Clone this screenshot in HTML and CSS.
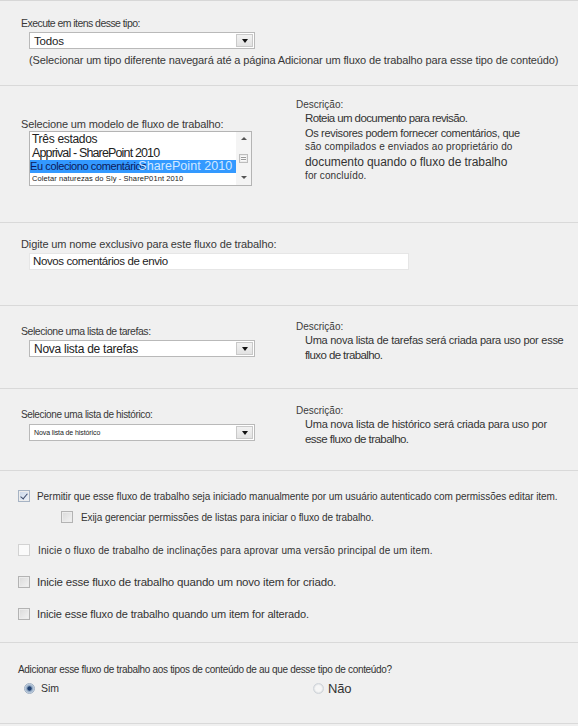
FILE: index.html
```html
<!DOCTYPE html>
<html lang="pt">
<head>
<meta charset="utf-8">
<title>Adicionar fluxo de trabalho</title>
<link rel="stylesheet" href="styles.css">
</head>
<body>
<div class="page">
  <section class="sec s1">
    <div class="lbl l-exec">Execute em itens desse tipo:</div>
    <div class="select sel-todos"><span class="val v-todos">Todos</span><span class="arrow"></span></div>
    <div class="note">(Selecionar um tipo diferente navegará até a página Adicionar um fluxo de trabalho para esse tipo de conteúdo)</div>
  </section>

  <section class="sec s2 split">
    <div class="left">
      <div class="lbl l-modelo">Selecione um modelo de fluxo de trabalho:</div>
      <div class="listbox">
        <div class="items">
          <div class="it it1">Três estados</div>
          <div class="it it2">Apprival - SharePoint 2010</div>
          <div class="it it3">Eu coleciono comentários<span class="ghost">SharePoint 2010</span></div>
          <div class="it it4">Coletar naturezas do Sly - ShareP01nt 2010</div>
        </div>
        <div class="sb"><span class="sb-up"></span><span class="sb-thumb"></span><span class="sb-down"></span></div>
      </div>
    </div>
    <div class="right">
      <div class="dlbl">Descrição:</div>
      <div class="desc d-wf">
        <div class="dl1">Roteia um documento para revisão.</div>
        <div class="dl2">Os revisores podem fornecer comentários, que</div>
        <div class="dl3">são compilados e enviados ao proprietário do</div>
        <div class="dl4">documento quando o fluxo de trabalho</div>
        <div class="dl5">for concluído.</div>
      </div>
    </div>
  </section>

  <section class="sec s3">
    <div class="lbl l-nome">Digite um nome exclusivo para este fluxo de trabalho:</div>
    <div class="input">Novos comentários de envio</div>
  </section>

  <section class="sec s4 split">
    <div class="left">
      <div class="lbl l-tarefas">Selecione uma lista de tarefas:</div>
      <div class="select sel-list"><span class="val v-tarefas">Nova lista de tarefas</span><span class="arrow"></span></div>
    </div>
    <div class="right">
      <div class="dlbl">Descrição:</div>
      <div class="desc d-list">
        <div class="ln-a">Uma nova lista de tarefas será criada para uso por esse</div>
        <div class="ln-b">fluxo de trabalho.</div>
      </div>
    </div>
  </section>

  <section class="sec s5 split">
    <div class="left">
      <div class="lbl l-hist">Selecione uma lista de histórico:</div>
      <div class="select sel-list"><span class="val v-hist">Nova lista de histórico</span><span class="arrow"></span></div>
    </div>
    <div class="right">
      <div class="dlbl">Descrição:</div>
      <div class="desc d-list">
        <div class="ln-h">Uma nova lista de histórico será criada para uso por</div>
        <div class="ln-c">esse fluxo de trabalho.</div>
      </div>
    </div>
  </section>

  <section class="sec s6">
    <label class="row r1"><span class="cb cb-checked"></span><span class="t t1">Permitir que esse fluxo de trabalho seja iniciado manualmente por um usuário autenticado com permissões editar item.</span></label>
    <label class="row r2"><span class="cb"></span><span class="t t2">Exija gerenciar permissões de listas para iniciar o fluxo de trabalho.</span></label>
    <label class="row r3"><span class="cb cb-light"></span><span class="t t3">Inicie o fluxo de trabalho de inclinações para aprovar uma versão principal de um item.</span></label>
    <label class="row r4"><span class="cb"></span><span class="t t4">Inicie esse fluxo de trabalho quando um novo item for criado.</span></label>
    <label class="row r5"><span class="cb"></span><span class="t t5">Inicie esse fluxo de trabalho quando um item for alterado.</span></label>
  </section>

  <section class="sec s7">
    <div class="q">Adicionar esse fluxo de trabalho aos tipos de conteúdo de au que desse tipo de conteúdo?</div>
    <div class="radios">
      <label class="radio r-sim"><span class="rb rb-on"></span><span class="rt-sim">Sim</span></label>
      <label class="radio r-nao"><span class="rb"></span><span class="rt-nao">Não</span></label>
    </div>
  </section>
</div>
</body>
</html>
```

FILE: styles.css
```css
html, body {
  margin: 0;
  padding: 0;
  background: #f0f0f0;
}
body {
  font-family: "Liberation Sans", Arial, sans-serif;
  color: #333;
  font-size: 11px;
}
.page {
  border-top: 1px solid #d7d7d7;
}
.sec {
  box-sizing: border-box;
  border-bottom: 1px solid #d9d9d9;
  padding-left: 21px;
}
.lbl {
  font-size: 11px;
  line-height: 14px;
  letter-spacing: -0.35px;
  color: #383838;
  white-space: nowrap;
}
.l-exec { font-size: 10.5px; letter-spacing: -0.55px; }
.l-modelo { letter-spacing: -0.15px; }
.l-nome { letter-spacing: -0.12px; }
.l-tarefas { font-size: 10.5px; letter-spacing: -0.45px; }
.l-hist { font-size: 10px; letter-spacing: -0.36px; }

/* select-like box */
.select {
  box-sizing: border-box;
  width: 226px;
  margin-left: 8px;
  background: #fff;
  border: 1px solid #b9b9b9;
  display: flex;
  align-items: center;
  justify-content: space-between;
}
.val {
  padding-left: 4px;
  color: #222;
  white-space: nowrap;
}
.arrow {
  box-sizing: border-box;
  width: 17px;
  align-self: stretch;
  margin: 1px 1px 1px 0;
  background: linear-gradient(#f2f2f2, #e2e2e2);
  border: 1px solid #c9c9c9;
  display: flex;
  align-items: center;
  justify-content: center;
}
.arrow::after {
  content: "";
  border-left: 3px solid transparent;
  border-right: 3px solid transparent;
  border-top: 4px solid #111;
  margin-top: 1px;
}

/* section 1 */
.s1 { height: 85px; padding-top: 15px; }
.sel-todos { height: 17px; margin-top: 2px; }
.v-todos { font-size: 11.5px; letter-spacing: -0.2px; }
.note {
  margin-top: 4px;
  margin-left: 8px;
  font-size: 11px;
  line-height: 14px;
  letter-spacing: -0.13px;
  color: #383838;
  white-space: nowrap;
}

/* split sections */
.split { display: flex; }
.split .left { width: 275px; flex: none; }
.split .right { flex: 1; }
.dlbl {
  font-size: 10px;
  line-height: 12px;
  letter-spacing: 0;
  color: #3c3c3c;
}
.desc { padding-left: 9px; color: #333; white-space: nowrap; }

/* section 2 */
.s2 { height: 137px; }
.s2 .left { padding-top: 31px; }
.s2 .right { padding-top: 13px; }
.d-wf div { line-height: 14.5px; }
.dl1 { font-size: 11.5px; letter-spacing: -0.6px; }
.dl2 { font-size: 11px; letter-spacing: -0.33px; }
.dl3 { font-size: 10px; letter-spacing: 0.13px; }
.dl4 { font-size: 12px; letter-spacing: -0.07px; }
.dl5 { font-size: 10px; letter-spacing: 0.1px; }

.listbox {
  box-sizing: border-box;
  margin-left: 8px;
  width: 223px;
  height: 55px;
  background: #fff;
  border: 1px solid #b4b4b4;
  display: flex;
}
.items { flex: 1; padding-top: 1px; overflow: hidden; }
.it { white-space: nowrap; color: #222; padding-left: 2px; }
.it1 { font-size: 12px; line-height: 13px; letter-spacing: -0.3px; }
.it2 { font-size: 12.5px; line-height: 14px; letter-spacing: -0.85px; }
.it3 {
  background: #3399ff;
  color: #0c1a5a;
  font-size: 11px;
  line-height: 13px;
  letter-spacing: -0.4px;
  padding-left: 0;
}
.ghost {
  color: #d2e8ff;
  font-size: 12.5px;
  letter-spacing: 0.05px;
  margin-left: -8px;
}
.it4 { font-size: 7.5px; line-height: 11px; letter-spacing: 0.1px; }
.sb {
  width: 15px;
  flex: none;
  background: #f4f4f4;
  display: flex;
  flex-direction: column;
  align-items: center;
  justify-content: space-between;
  padding: 5px 0 6px;
  box-sizing: border-box;
}
.sb-up {
  border-left: 3px solid transparent;
  border-right: 3px solid transparent;
  border-bottom: 3px solid #555;
}
.sb-down {
  border-left: 3px solid transparent;
  border-right: 3px solid transparent;
  border-top: 3px solid #555;
}
.sb-thumb {
  width: 9px;
  height: 9px;
  box-sizing: border-box;
  border: 1px solid #bdbdbd;
  background: repeating-linear-gradient(#fafafa 0 1px, #9a9a9a 1px 2px) center / 5px 5px no-repeat, #ececec;
}

/* section 3 */
.s3 { height: 83px; padding-top: 14px; }
.input {
  box-sizing: border-box;
  margin-left: 8px;
  margin-top: 2px;
  width: 380px;
  height: 17px;
  background: #fff;
  border: 1px solid #e6e6e6;
  padding-left: 3px;
  font-size: 11.5px;
  line-height: 15px;
  letter-spacing: -0.4px;
  color: #222;
  white-space: nowrap;
}

/* sections 4/5 */
.s4 { height: 83px; }
.s4 .left { padding-top: 18px; }
.s4 .right { padding-top: 15px; }
.s5 { height: 82px; }
.s5 .left { padding-top: 19px; }
.s5 .right { padding-top: 16px; }
.sel-list { height: 17px; margin-top: 2px; }
.v-tarefas { font-size: 12px; letter-spacing: -0.26px; }
.v-hist { font-size: 7px; letter-spacing: -0.1px; }
.d-list div { line-height: 15px; }
.ln-a { font-size: 11px; letter-spacing: -0.27px; }
.ln-h { font-size: 11px; letter-spacing: -0.24px; }
.ln-b { font-size: 11.5px; letter-spacing: -0.6px; }
.ln-c { font-size: 11.5px; letter-spacing: -0.53px; }

/* section 6 checkboxes */
.s6 { height: 172px; padding-left: 18px; padding-top: 18px; }
.row {
  display: flex;
  align-items: center;
  height: 14px;
  white-space: nowrap;
}
.r2 { margin-top: 7px; margin-left: 43px; }
.r3, .r4, .r5 { margin-top: 19px; }
.r4, .r5 { margin-top: 18px; }
.cb {
  box-sizing: border-box;
  width: 12px;
  height: 12px;
  flex: none;
  border: 1px solid #b3b3b3;
  background: linear-gradient(135deg, #d9d9d9, #f3f3f3);
  box-shadow: inset 0 0 0 1px #ececec;
  position: relative;
}
.cb-checked {
  border-color: #a6b3c4;
  background: linear-gradient(135deg, #c9d6e8, #eef3fa);
}
.cb-checked::after {
  content: "";
  position: absolute;
  left: 3px;
  top: 1px;
  width: 3px;
  height: 6px;
  border-right: 1.5px solid #3b4a6b;
  border-bottom: 1.5px solid #3b4a6b;
  transform: rotate(40deg);
}
.cb-light {
  border-color: #d2d2d2;
  background: #fafafa;
  box-shadow: none;
}
.t { color: #333; }
.t1 { margin-left: 7px; font-size: 10px; letter-spacing: -0.06px; }
.t2 { margin-left: 8px; font-size: 10px; letter-spacing: -0.09px; }
.t3 { margin-left: 8px; font-size: 10px; letter-spacing: 0.12px; }
.t4 { margin-left: 7px; font-size: 11.5px; letter-spacing: -0.19px; }
.t5 { margin-left: 7px; font-size: 11px; letter-spacing: -0.14px; }

/* section 7 radios */
.s7 { height: 81px; padding-left: 18px; padding-top: 20px; }
.q {
  font-size: 10px;
  line-height: 14px;
  letter-spacing: -0.32px;
  color: #333;
  white-space: nowrap;
}
.radios {
  display: flex;
  align-items: center;
  height: 14px;
  margin-top: 4px;
}
.radio { display: flex; align-items: center; }
.r-sim { margin-left: 6px; width: 289px; }
.rb {
  box-sizing: border-box;
  width: 11px;
  height: 11px;
  border-radius: 50%;
  border: 1px solid #cfd4da;
  background: radial-gradient(circle, #f6f6f6 0 45%, #e2e4e6 70%);
  flex: none;
}
.rb-on {
  border-color: #9fb0c4;
  background: radial-gradient(circle, #1f3f6f 0 28%, #7d97b6 38%, #c8d5e4 70%);
}
.rt-sim { margin-left: 6px; font-size: 10.5px; color: #333; }
.rt-nao { margin-left: 4px; font-size: 13px; color: #333; letter-spacing: -0.2px; }
```
